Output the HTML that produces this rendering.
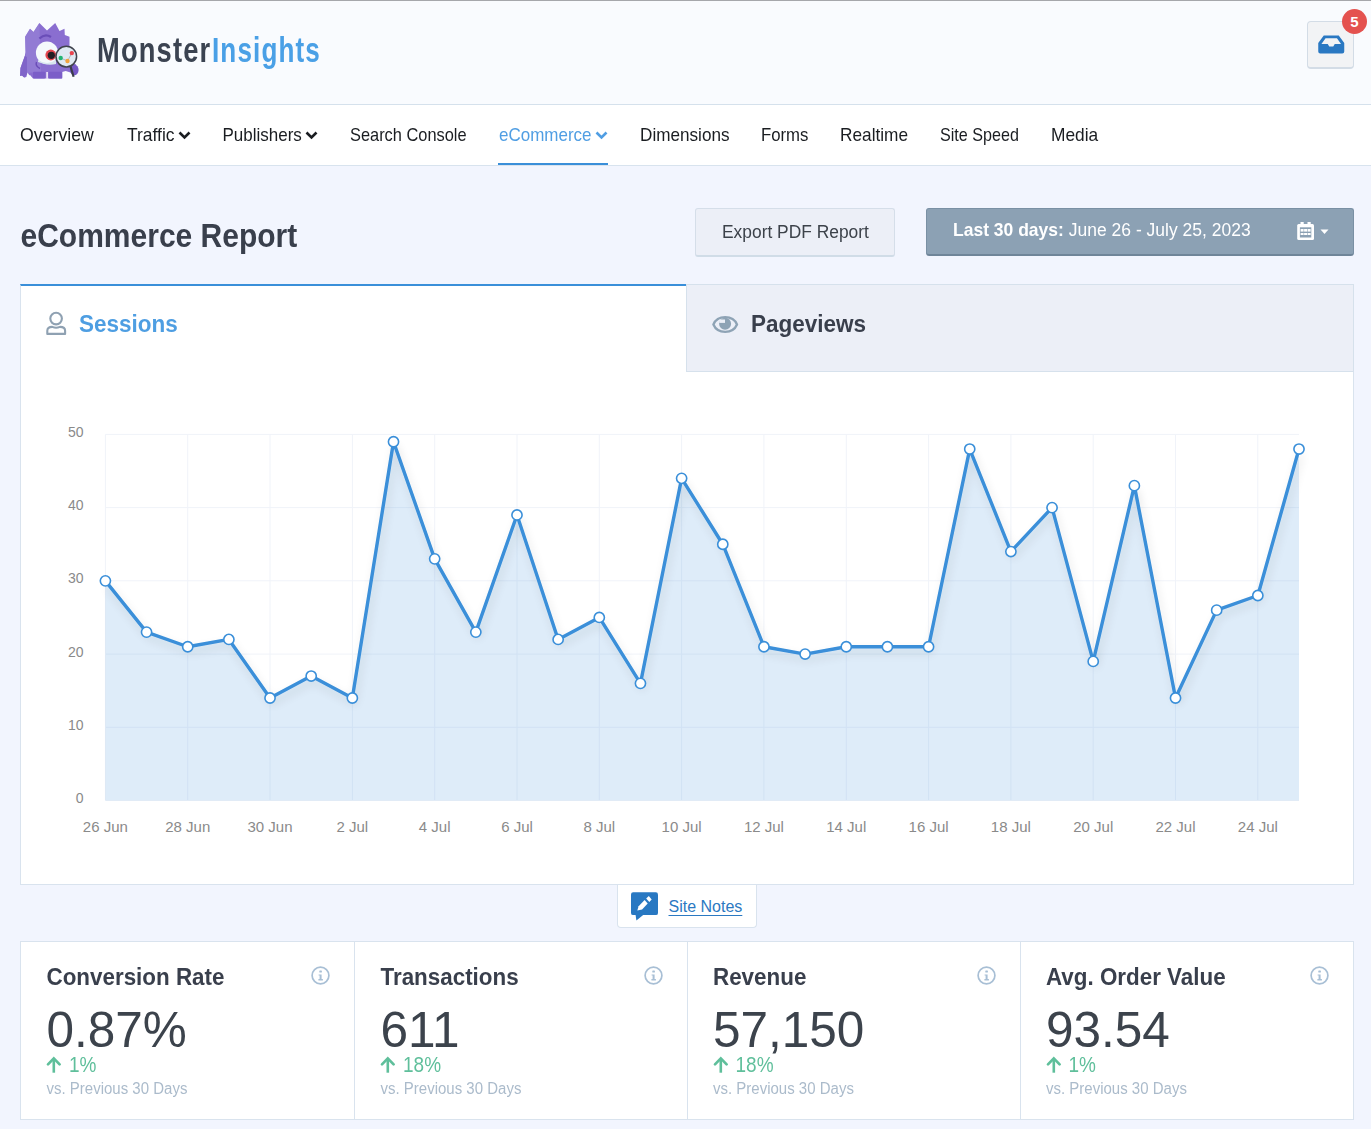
<!DOCTYPE html>
<html><head><meta charset="utf-8">
<style>
*{box-sizing:border-box;margin:0;padding:0}
html,body{width:1371px;height:1129px;overflow:hidden}
body{position:relative;background:#f2f5fe;font-family:"Liberation Sans",sans-serif;color:#393f4c}
.a{position:absolute}
.t{position:absolute;white-space:nowrap}
svg text{font-family:"Liberation Sans",sans-serif}
</style></head>
<body>

<div class="a" style="left:0;top:0;width:1371px;height:1px;background:#a6a7ab"></div>
<div class="a" style="left:0;top:1px;width:1371px;height:104px;background:#f9fbfe;border-bottom:1px solid #d5e1ec"></div>
<svg class="a" style="left:0;top:0" width="100" height="100" viewBox="0 0 100 100">
  <path d="M25.1 36.7 L30 28.8 L33.5 32 L39.4 23 L47 30.6 L55.2 23 L59.5 31 L64.5 28.8 L64.8 35 L69.5 36.7 L69.5 52 L72 62 L76 64.5 L78 70 L75.5 75 L72 73 L65.7 71 L62.2 72 L62.2 78.5 L33 78.5 L30 75 L26.5 77 L24.2 77.6 L22 75.5 L20.1 75.9 L20.5 68 L24.8 56 L25.5 52 Z" fill="#8a6ed0"/>
  <path d="M25.1 36.7 L30 28.8 L33.5 32 L39.4 23 L40 42 L41 72 L26.5 73 Z" fill="#9580d6" opacity="0.7"/>
  <path d="M24.8 56 L27 57 L27 74 L24.2 77.6 L22 75.5 L20.1 75.9 L20.5 68 Z" fill="#8064c9"/>
  <rect x="33" y="71.8" width="12.2" height="6.7" rx="1" fill="#7b5ec8"/><rect x="48.7" y="71.8" width="13.5" height="6.7" rx="1" fill="#7b5ec8"/><rect x="46.2" y="72" width="1.8" height="7" fill="#e6def5"/><path d="M27.5 72.5 L31.5 78.6 L26 78.6 Z" fill="#f9fbfe"/>
  <path d="M39.4 38.5 Q45 33 51 37" stroke="#6a4db8" stroke-width="2.2" fill="none"/>
  <ellipse cx="47" cy="52.8" rx="11.1" ry="11.4" fill="#f5f9fc"/>
  <path d="M38 60 Q47 66 56 60 L56 64 Q47 66 38 62 Z" fill="#d8e6ee"/>
  <circle cx="50.8" cy="55" r="5.4" fill="#e4474f"/><circle cx="51.3" cy="55.3" r="3.6" fill="#241f24"/>
  <path d="M40 68.5 Q35 66 36.5 62" stroke="#6a4db8" stroke-width="1.4" fill="none"/>
  <ellipse cx="74.3" cy="70" rx="4.3" ry="5.2" fill="#7557c5"/>
  <path d="M70.4 66 L73.6 76.8" stroke="#3a3d48" stroke-width="2.2"/>
  <circle cx="66.3" cy="56.6" r="10.3" fill="#dfe9f2" stroke="#40434d" stroke-width="1.5"/>
  <path d="M60.7 58 L67.5 61 L71.8 53.1" stroke="#9aa0a8" stroke-width="0.7" fill="none"/>
  <circle cx="60.7" cy="58" r="2.2" fill="#22b573"/><circle cx="67.5" cy="61" r="2.2" fill="#f2a23c"/><circle cx="71.8" cy="53.1" r="2.2" fill="#e8444e"/>
</svg>
<div class="t" style="left:96.5px;top:31.6px;font-size:35px;line-height:35px;font-weight:bold;letter-spacing:1.5px;color:#3b4351;transform:scaleX(0.78);transform-origin:0 0">Monster</div>
<div class="t" style="left:212.2px;top:31.6px;font-size:35px;line-height:35px;font-weight:bold;letter-spacing:1.5px;color:#4aa0e6;transform:scaleX(0.745);transform-origin:0 0">Insights</div>
<div class="a" style="left:1307px;top:21px;width:47px;height:48px;background:#f2f3f5;border:1px solid #d3dce6;border-bottom-width:2px;border-radius:4px">
 <svg class="a" style="left:8.5px;top:12.5px" width="28.5" height="19" viewBox="0 0 28 19"><path d="M6.5 0.5 H21.5 L27 8 V16.5 Q27 18.5 25 18.5 H3 Q1 18.5 1 16.5 V8 Z M8.3 3.3 L4.2 9 H10.5 L12 11.6 H16 L17.5 9 H23.8 L19.7 3.3 Z" fill="#2a78c2" fill-rule="evenodd"/></svg>
</div>
<div class="a" style="left:1342px;top:9px;width:25px;height:25px;border-radius:50%;background:#e4524f;color:#fff;font-weight:bold;font-size:15px;text-align:center;line-height:25px">5</div>
<div class="a" style="left:0;top:105px;width:1371px;height:61px;background:#fff;border-bottom:1px solid #d8e3ee"></div>
<div class="t " style="left:20.3px;top:126.62px;font-size:17px;line-height:17px;color:#1a1d21;transform:scale(1.042,1.08);transform-origin:0 14.4px;">Overview</div>
<div class="t " style="left:127.2px;top:126.62px;font-size:17px;line-height:17px;color:#1a1d21;transform:scale(1.026,1.08);transform-origin:0 14.4px;">Traffic</div>
<div class="t " style="left:222.5px;top:126.62px;font-size:17px;line-height:17px;color:#1a1d21;transform:scale(1.0,1.08);transform-origin:0 14.4px;">Publishers</div>
<div class="t " style="left:349.5px;top:126.62px;font-size:17px;line-height:17px;color:#1a1d21;transform:scale(0.964,1.08);transform-origin:0 14.4px;">Search Console</div>
<div class="t " style="left:639.5px;top:126.62px;font-size:17px;line-height:17px;color:#1a1d21;transform:scale(1.008,1.08);transform-origin:0 14.4px;">Dimensions</div>
<div class="t " style="left:760.5px;top:126.62px;font-size:17px;line-height:17px;color:#1a1d21;transform:scale(0.985,1.08);transform-origin:0 14.4px;">Forms</div>
<div class="t " style="left:840px;top:126.62px;font-size:17px;line-height:17px;color:#1a1d21;transform:scale(1.015,1.08);transform-origin:0 14.4px;">Realtime</div>
<div class="t " style="left:939.5px;top:126.62px;font-size:17px;line-height:17px;color:#1a1d21;transform:scale(0.949,1.08);transform-origin:0 14.4px;">Site Speed</div>
<div class="t " style="left:1050.5px;top:126.62px;font-size:17px;line-height:17px;color:#1a1d21;transform:scale(1.02,1.08);transform-origin:0 14.4px;">Media</div>
<div class="t " style="left:499px;top:126.62px;font-size:17px;line-height:17px;color:#509ee3;transform:scaleY(1.08);transform-origin:0 14.38px;">eCommerce</div>
<svg class="a" style="left:178px;top:131px" width="13" height="9" viewBox="0 0 13 9"><path d="M1.5 1.5 L6.5 6.5 L11.5 1.5" stroke="#1a1d21" stroke-width="2.6" fill="none"/></svg>
<svg class="a" style="left:304.5px;top:131px" width="13" height="9" viewBox="0 0 13 9"><path d="M1.5 1.5 L6.5 6.5 L11.5 1.5" stroke="#1a1d21" stroke-width="2.6" fill="none"/></svg>
<svg class="a" style="left:595px;top:131px" width="13" height="9" viewBox="0 0 13 9"><path d="M1.5 1.5 L6.5 6.5 L11.5 1.5" stroke="#509ee3" stroke-width="2.6" fill="none"/></svg>
<div class="a" style="left:498px;top:163px;width:110px;height:2px;background:#3a8fd9"></div>
<div class="t " style="left:20.5px;top:221.62px;font-size:30px;line-height:30px;color:#393f4c;font-weight:bold;transform:scaleY(1.08);transform-origin:0 25.38px;">eCommerce Report</div>
<div class="a" style="left:695px;top:208px;width:200px;height:49px;background:#eceff7;border:1px solid #d5dee9;border-bottom:2px solid #d0dce7;border-radius:3px"></div>
<div class="t " style="left:722px;top:224.28px;font-size:17.4px;line-height:17.4px;color:#3c424a;transform:scaleY(1.06);transform-origin:0 14.72px;">Export PDF Report</div>
<div class="a" style="left:926px;top:208px;width:428px;height:48px;background:#8ca1b4;border:1px solid #7a90a4;border-bottom:2px solid #6f8599;border-radius:3px">
 <svg class="a" style="left:370px;top:13px" width="17" height="18" viewBox="0 0 17 18"><rect x="3.5" y="0" width="3.2" height="3" fill="#fff"/><rect x="10.5" y="0" width="3.2" height="3" fill="#fff"/><rect x="0.2" y="2" width="16.8" height="16" rx="1.5" fill="#fff"/><rect x="2.9" y="5.3" width="11.4" height="10.2" fill="#8ca1b4"/><g fill="#fff"><rect x="3.6" y="7" width="3" height="2.6"/><rect x="7.1" y="7" width="3" height="2.6"/><rect x="10.6" y="7" width="3" height="2.6"/><rect x="3.6" y="11" width="3" height="2"/><rect x="7.1" y="11" width="3" height="2"/><rect x="10.6" y="11" width="3" height="2"/></g></svg>
 <svg class="a" style="left:393px;top:20px" width="9" height="6" viewBox="0 0 9 6"><path d="M0.5 0.5 H8.5 L4.5 5 Z" fill="#fff"/></svg>
</div>
<div class="t " style="left:953px;top:222.19px;font-size:17.5px;line-height:17.5px;color:#fff;transform:scaleY(1.03);transform-origin:0 14.80px;"><b>Last 30 days:</b> June 26 - July 25, 2023</div>
<div class="a" style="left:20px;top:284px;width:666px;height:88px;background:#fff;border-top:2px solid #3a8fd9;border-left:1px solid #d9e3ee"></div>
<div class="a" style="left:686px;top:284px;width:668px;height:88px;background:#eceff7;border:1px solid #d6e1ec"></div>
<div class="a" style="left:20px;top:372px;width:1334px;height:513px;background:#fff;border:1px solid #d9e3ee;border-top:none"></div>
<svg class="a" style="left:45px;top:311px" width="23" height="25" viewBox="0 0 23 25"><circle cx="11.1" cy="7.6" r="5.8" fill="none" stroke="#8fa1b2" stroke-width="2.1"/><path d="M2.3 22.9 V19.8 Q2.3 15.9 7.2 15.9 Q9.3 16.8 11.1 16.8 Q12.9 16.8 15 15.9 Q20.1 15.9 20.1 19.8 V22.9 Z" fill="none" stroke="#8fa1b2" stroke-width="2.1" stroke-linejoin="round"/></svg>
<div class="t " style="left:79px;top:313.76px;font-size:22.5px;line-height:22.5px;color:#4e9ee2;font-weight:bold;transform:scaleY(1.07);transform-origin:0 19.04px;">Sessions</div>
<svg class="a" style="left:712px;top:316px" width="27" height="18" viewBox="0 0 27 18"><path d="M1.4 8.5 C3.2 4.2 7.8 1.2 13.2 1.2 C18.6 1.2 23.2 4.2 25 8.5 C23.2 12.8 18.6 15.8 13.2 15.8 C7.8 15.8 3.2 12.8 1.4 8.5 Z" fill="none" stroke="#8ea3b5" stroke-width="2.3"/><circle cx="13.1" cy="7.8" r="6" fill="#8ea3b5"/><rect x="7.3" y="3.5" width="5.7" height="3.4" fill="#eceff7"/></svg>
<div class="t " style="left:751px;top:313.96px;font-size:22.5px;line-height:22.5px;color:#393f4c;font-weight:bold;transform:scaleY(1.07);transform-origin:0 19.04px;">Pageviews</div>
<svg class="a" style="left:0;top:0" width="1371" height="1129">
 <defs>
  <filter id="sh" x="-5%" y="-20%" width="110%" height="150%"><feGaussianBlur in="SourceAlpha" stdDeviation="5"/><feOffset dx="1.5" dy="5"/><feComponentTransfer><feFuncA type="linear" slope="0.13"/></feComponentTransfer><feMerge><feMergeNode/><feMergeNode in="SourceGraphic"/></feMerge></filter>
 </defs>
 <g stroke="#f0f3f9" stroke-width="1" fill="none"><line x1="105.4" y1="434.4" x2="1299.0" y2="434.4"/><line x1="105.4" y1="507.6" x2="1299.0" y2="507.6"/><line x1="105.4" y1="580.8" x2="1299.0" y2="580.8"/><line x1="105.4" y1="654.1" x2="1299.0" y2="654.1"/><line x1="105.4" y1="727.3" x2="1299.0" y2="727.3"/><line x1="105.4" y1="800.5" x2="1299.0" y2="800.5"/><line x1="105.4" y1="434.4" x2="105.4" y2="800.5"/><line x1="187.7" y1="434.4" x2="187.7" y2="800.5"/><line x1="270.0" y1="434.4" x2="270.0" y2="800.5"/><line x1="352.4" y1="434.4" x2="352.4" y2="800.5"/><line x1="434.7" y1="434.4" x2="434.7" y2="800.5"/><line x1="517.0" y1="434.4" x2="517.0" y2="800.5"/><line x1="599.3" y1="434.4" x2="599.3" y2="800.5"/><line x1="681.6" y1="434.4" x2="681.6" y2="800.5"/><line x1="763.9" y1="434.4" x2="763.9" y2="800.5"/><line x1="846.3" y1="434.4" x2="846.3" y2="800.5"/><line x1="928.6" y1="434.4" x2="928.6" y2="800.5"/><line x1="1010.9" y1="434.4" x2="1010.9" y2="800.5"/><line x1="1093.2" y1="434.4" x2="1093.2" y2="800.5"/><line x1="1175.5" y1="434.4" x2="1175.5" y2="800.5"/><line x1="1257.8" y1="434.4" x2="1257.8" y2="800.5"/></g>
 <path d="M105.40,580.84 L146.56,632.09 L187.72,646.74 L228.88,639.42 L270.03,697.99 L311.19,676.03 L352.35,697.99 L393.51,441.72 L434.67,558.87 L475.83,632.09 L516.99,514.94 L558.14,639.42 L599.30,617.45 L640.46,683.35 L681.62,478.33 L722.78,544.23 L763.94,646.74 L805.10,654.06 L846.26,646.74 L887.41,646.74 L928.57,646.74 L969.73,449.04 L1010.89,551.55 L1052.05,507.62 L1093.21,661.38 L1134.37,485.65 L1175.52,697.99 L1216.68,610.13 L1257.84,595.48 L1299.00,449.04 L1299.00,800.50 L105.40,800.50 Z" fill="#3a8fd9" fill-opacity="0.17"/>
 <path d="M105.40,580.84 L146.56,632.09 L187.72,646.74 L228.88,639.42 L270.03,697.99 L311.19,676.03 L352.35,697.99 L393.51,441.72 L434.67,558.87 L475.83,632.09 L516.99,514.94 L558.14,639.42 L599.30,617.45 L640.46,683.35 L681.62,478.33 L722.78,544.23 L763.94,646.74 L805.10,654.06 L846.26,646.74 L887.41,646.74 L928.57,646.74 L969.73,449.04 L1010.89,551.55 L1052.05,507.62 L1093.21,661.38 L1134.37,485.65 L1175.52,697.99 L1216.68,610.13 L1257.84,595.48 L1299.00,449.04" fill="none" stroke="#3a8fd9" stroke-width="3.4" stroke-linejoin="round" filter="url(#sh)"/>
 <g fill="#fff" stroke="#3a8fd9" stroke-width="1.6"><circle cx="105.40" cy="580.84" r="5.1"/><circle cx="146.56" cy="632.09" r="5.1"/><circle cx="187.72" cy="646.74" r="5.1"/><circle cx="228.88" cy="639.42" r="5.1"/><circle cx="270.03" cy="697.99" r="5.1"/><circle cx="311.19" cy="676.03" r="5.1"/><circle cx="352.35" cy="697.99" r="5.1"/><circle cx="393.51" cy="441.72" r="5.1"/><circle cx="434.67" cy="558.87" r="5.1"/><circle cx="475.83" cy="632.09" r="5.1"/><circle cx="516.99" cy="514.94" r="5.1"/><circle cx="558.14" cy="639.42" r="5.1"/><circle cx="599.30" cy="617.45" r="5.1"/><circle cx="640.46" cy="683.35" r="5.1"/><circle cx="681.62" cy="478.33" r="5.1"/><circle cx="722.78" cy="544.23" r="5.1"/><circle cx="763.94" cy="646.74" r="5.1"/><circle cx="805.10" cy="654.06" r="5.1"/><circle cx="846.26" cy="646.74" r="5.1"/><circle cx="887.41" cy="646.74" r="5.1"/><circle cx="928.57" cy="646.74" r="5.1"/><circle cx="969.73" cy="449.04" r="5.1"/><circle cx="1010.89" cy="551.55" r="5.1"/><circle cx="1052.05" cy="507.62" r="5.1"/><circle cx="1093.21" cy="661.38" r="5.1"/><circle cx="1134.37" cy="485.65" r="5.1"/><circle cx="1175.52" cy="697.99" r="5.1"/><circle cx="1216.68" cy="610.13" r="5.1"/><circle cx="1257.84" cy="595.48" r="5.1"/><circle cx="1299.00" cy="449.04" r="5.1"/></g>
</svg>
<div class="t" style="left:0;width:83.5px;text-align:right;top:424.66px;font-size:14px;line-height:14px;color:#8a8a8a">50</div>
<div class="t" style="left:0;width:83.5px;text-align:right;top:497.96px;font-size:14px;line-height:14px;color:#8a8a8a">40</div>
<div class="t" style="left:0;width:83.5px;text-align:right;top:571.26px;font-size:14px;line-height:14px;color:#8a8a8a">30</div>
<div class="t" style="left:0;width:83.5px;text-align:right;top:644.56px;font-size:14px;line-height:14px;color:#8a8a8a">20</div>
<div class="t" style="left:0;width:83.5px;text-align:right;top:717.86px;font-size:14px;line-height:14px;color:#8a8a8a">10</div>
<div class="t" style="left:0;width:83.5px;text-align:right;top:791.16px;font-size:14px;line-height:14px;color:#8a8a8a">0</div>
<div class="t" style="left:55.40px;width:100px;text-align:center;top:818.91px;font-size:15px;line-height:15px;color:#8a8a8a">26 Jun</div>
<div class="t" style="left:137.72px;width:100px;text-align:center;top:818.91px;font-size:15px;line-height:15px;color:#8a8a8a">28 Jun</div>
<div class="t" style="left:220.03px;width:100px;text-align:center;top:818.91px;font-size:15px;line-height:15px;color:#8a8a8a">30 Jun</div>
<div class="t" style="left:302.35px;width:100px;text-align:center;top:818.91px;font-size:15px;line-height:15px;color:#8a8a8a">2 Jul</div>
<div class="t" style="left:384.67px;width:100px;text-align:center;top:818.91px;font-size:15px;line-height:15px;color:#8a8a8a">4 Jul</div>
<div class="t" style="left:466.99px;width:100px;text-align:center;top:818.91px;font-size:15px;line-height:15px;color:#8a8a8a">6 Jul</div>
<div class="t" style="left:549.30px;width:100px;text-align:center;top:818.91px;font-size:15px;line-height:15px;color:#8a8a8a">8 Jul</div>
<div class="t" style="left:631.62px;width:100px;text-align:center;top:818.91px;font-size:15px;line-height:15px;color:#8a8a8a">10 Jul</div>
<div class="t" style="left:713.94px;width:100px;text-align:center;top:818.91px;font-size:15px;line-height:15px;color:#8a8a8a">12 Jul</div>
<div class="t" style="left:796.26px;width:100px;text-align:center;top:818.91px;font-size:15px;line-height:15px;color:#8a8a8a">14 Jul</div>
<div class="t" style="left:878.57px;width:100px;text-align:center;top:818.91px;font-size:15px;line-height:15px;color:#8a8a8a">16 Jul</div>
<div class="t" style="left:960.89px;width:100px;text-align:center;top:818.91px;font-size:15px;line-height:15px;color:#8a8a8a">18 Jul</div>
<div class="t" style="left:1043.21px;width:100px;text-align:center;top:818.91px;font-size:15px;line-height:15px;color:#8a8a8a">20 Jul</div>
<div class="t" style="left:1125.52px;width:100px;text-align:center;top:818.91px;font-size:15px;line-height:15px;color:#8a8a8a">22 Jul</div>
<div class="t" style="left:1207.84px;width:100px;text-align:center;top:818.91px;font-size:15px;line-height:15px;color:#8a8a8a">24 Jul</div>
<div class="a" style="left:617px;top:885px;width:140px;height:43px;background:#fff;border:1px solid #d9e3ee;border-top:none;border-radius:0 0 4px 4px">
 <svg class="a" style="left:13px;top:7px" width="28" height="29" viewBox="0 0 28 29"><rect x="0" y="0.3" width="27" height="22.8" rx="2.2" fill="#2878c2"/><path d="M4.5 22.5 L5.4 28.4 L12.8 22.5 Z" fill="#2878c2"/><path d="M6.3 18.4 L7.6 14.2 L13.6 8.0 L16.7 11.5 L11.1 17.4 Z" fill="#fff"/><path d="M15.2 6.5 L17.8 4.1 L20.7 7.5 L18.3 10.1 Z" fill="#fff"/></svg>
</div>
<div class="t " style="left:668.5px;top:898.96px;font-size:16px;line-height:16px;color:#2b79c2;text-decoration:underline;text-underline-offset:2.5px;">Site Notes</div>
<div class="a" style="left:20px;top:941px;width:1334px;height:179px;background:#fff;border:1px solid #d9e3ee"></div>
<div class="a" style="left:354px;top:941px;width:1px;height:179px;background:#d9e3ee"></div>
<div class="a" style="left:687px;top:941px;width:1px;height:179px;background:#d9e3ee"></div>
<div class="a" style="left:1020px;top:941px;width:1px;height:179px;background:#d9e3ee"></div>
<div class="t " style="left:46.5px;top:966.55px;font-size:22.4px;line-height:22.4px;color:#393f4c;font-weight:bold;transform:scaleY(1.1);transform-origin:0 18.95px;">Conversion Rate</div>
<div class="t " style="left:46.5px;top:1004.62px;font-size:49.5px;line-height:49.5px;color:#3c434c;">0.87%</div>
<svg class="a" style="left:46.0px;top:1055.5px" width="16" height="18" viewBox="0 0 16 18"><path d="M7.8 16.7 V3" stroke="#5fbf9b" stroke-width="2.6" fill="none"/><path d="M2 8.4 L7.8 2.4 L13.6 8.4" stroke="#5fbf9b" stroke-width="2.7" stroke-linecap="round" fill="none"/></svg>
<div class="t " style="left:69.0px;top:1056.33px;font-size:19px;line-height:19px;color:#5fbf9b;transform:scaleY(1.12);transform-origin:0 16.07px;">1%</div>
<div class="t " style="left:46.5px;top:1080.71px;font-size:15px;line-height:15px;color:#abbbcb;transform:scaleY(1.15);transform-origin:0 12.69px;">vs. Previous 30 Days</div>
<div class="t " style="left:380.5px;top:966.55px;font-size:22.4px;line-height:22.4px;color:#393f4c;font-weight:bold;transform:scaleY(1.1);transform-origin:0 18.95px;">Transactions</div>
<div class="t " style="left:380.5px;top:1004.62px;font-size:49.5px;line-height:49.5px;color:#3c434c;">611</div>
<svg class="a" style="left:380.0px;top:1055.5px" width="16" height="18" viewBox="0 0 16 18"><path d="M7.8 16.7 V3" stroke="#5fbf9b" stroke-width="2.6" fill="none"/><path d="M2 8.4 L7.8 2.4 L13.6 8.4" stroke="#5fbf9b" stroke-width="2.7" stroke-linecap="round" fill="none"/></svg>
<div class="t " style="left:403.0px;top:1056.33px;font-size:19px;line-height:19px;color:#5fbf9b;transform:scaleY(1.12);transform-origin:0 16.07px;">18%</div>
<div class="t " style="left:380.5px;top:1080.71px;font-size:15px;line-height:15px;color:#abbbcb;transform:scaleY(1.15);transform-origin:0 12.69px;">vs. Previous 30 Days</div>
<div class="t " style="left:713px;top:966.55px;font-size:22.4px;line-height:22.4px;color:#393f4c;font-weight:bold;transform:scaleY(1.1);transform-origin:0 18.95px;">Revenue</div>
<div class="t " style="left:713px;top:1004.62px;font-size:49.5px;line-height:49.5px;color:#3c434c;">57,150</div>
<svg class="a" style="left:712.5px;top:1055.5px" width="16" height="18" viewBox="0 0 16 18"><path d="M7.8 16.7 V3" stroke="#5fbf9b" stroke-width="2.6" fill="none"/><path d="M2 8.4 L7.8 2.4 L13.6 8.4" stroke="#5fbf9b" stroke-width="2.7" stroke-linecap="round" fill="none"/></svg>
<div class="t " style="left:735.5px;top:1056.33px;font-size:19px;line-height:19px;color:#5fbf9b;transform:scaleY(1.12);transform-origin:0 16.07px;">18%</div>
<div class="t " style="left:713px;top:1080.71px;font-size:15px;line-height:15px;color:#abbbcb;transform:scaleY(1.15);transform-origin:0 12.69px;">vs. Previous 30 Days</div>
<div class="t " style="left:1046px;top:966.55px;font-size:22.4px;line-height:22.4px;color:#393f4c;font-weight:bold;transform:scaleY(1.1);transform-origin:0 18.95px;">Avg. Order Value</div>
<div class="t " style="left:1046px;top:1004.62px;font-size:49.5px;line-height:49.5px;color:#3c434c;">93.54</div>
<svg class="a" style="left:1045.5px;top:1055.5px" width="16" height="18" viewBox="0 0 16 18"><path d="M7.8 16.7 V3" stroke="#5fbf9b" stroke-width="2.6" fill="none"/><path d="M2 8.4 L7.8 2.4 L13.6 8.4" stroke="#5fbf9b" stroke-width="2.7" stroke-linecap="round" fill="none"/></svg>
<div class="t " style="left:1068.5px;top:1056.33px;font-size:19px;line-height:19px;color:#5fbf9b;transform:scaleY(1.12);transform-origin:0 16.07px;">1%</div>
<div class="t " style="left:1046px;top:1080.71px;font-size:15px;line-height:15px;color:#abbbcb;transform:scaleY(1.15);transform-origin:0 12.69px;">vs. Previous 30 Days</div>
<svg class="a" style="left:310.5px;top:966px" width="19" height="19" viewBox="0 0 19 19"><circle cx="9.5" cy="9.5" r="8.4" fill="none" stroke="#a8bfd5" stroke-width="1.7"/><rect x="8.3" y="4.4" width="2.6" height="2.2" rx="0.6" fill="#a8bfd5"/><path d="M7.6 8.4 H10.6 V13.1 H11.9 V14.4 H7.4 V13.1 H8.6 V9.6 H7.6 Z" fill="#a8bfd5"/></svg>
<svg class="a" style="left:643.5px;top:966px" width="19" height="19" viewBox="0 0 19 19"><circle cx="9.5" cy="9.5" r="8.4" fill="none" stroke="#a8bfd5" stroke-width="1.7"/><rect x="8.3" y="4.4" width="2.6" height="2.2" rx="0.6" fill="#a8bfd5"/><path d="M7.6 8.4 H10.6 V13.1 H11.9 V14.4 H7.4 V13.1 H8.6 V9.6 H7.6 Z" fill="#a8bfd5"/></svg>
<svg class="a" style="left:976.5px;top:966px" width="19" height="19" viewBox="0 0 19 19"><circle cx="9.5" cy="9.5" r="8.4" fill="none" stroke="#a8bfd5" stroke-width="1.7"/><rect x="8.3" y="4.4" width="2.6" height="2.2" rx="0.6" fill="#a8bfd5"/><path d="M7.6 8.4 H10.6 V13.1 H11.9 V14.4 H7.4 V13.1 H8.6 V9.6 H7.6 Z" fill="#a8bfd5"/></svg>
<svg class="a" style="left:1309.5px;top:966px" width="19" height="19" viewBox="0 0 19 19"><circle cx="9.5" cy="9.5" r="8.4" fill="none" stroke="#a8bfd5" stroke-width="1.7"/><rect x="8.3" y="4.4" width="2.6" height="2.2" rx="0.6" fill="#a8bfd5"/><path d="M7.6 8.4 H10.6 V13.1 H11.9 V14.4 H7.4 V13.1 H8.6 V9.6 H7.6 Z" fill="#a8bfd5"/></svg>
</body></html>
